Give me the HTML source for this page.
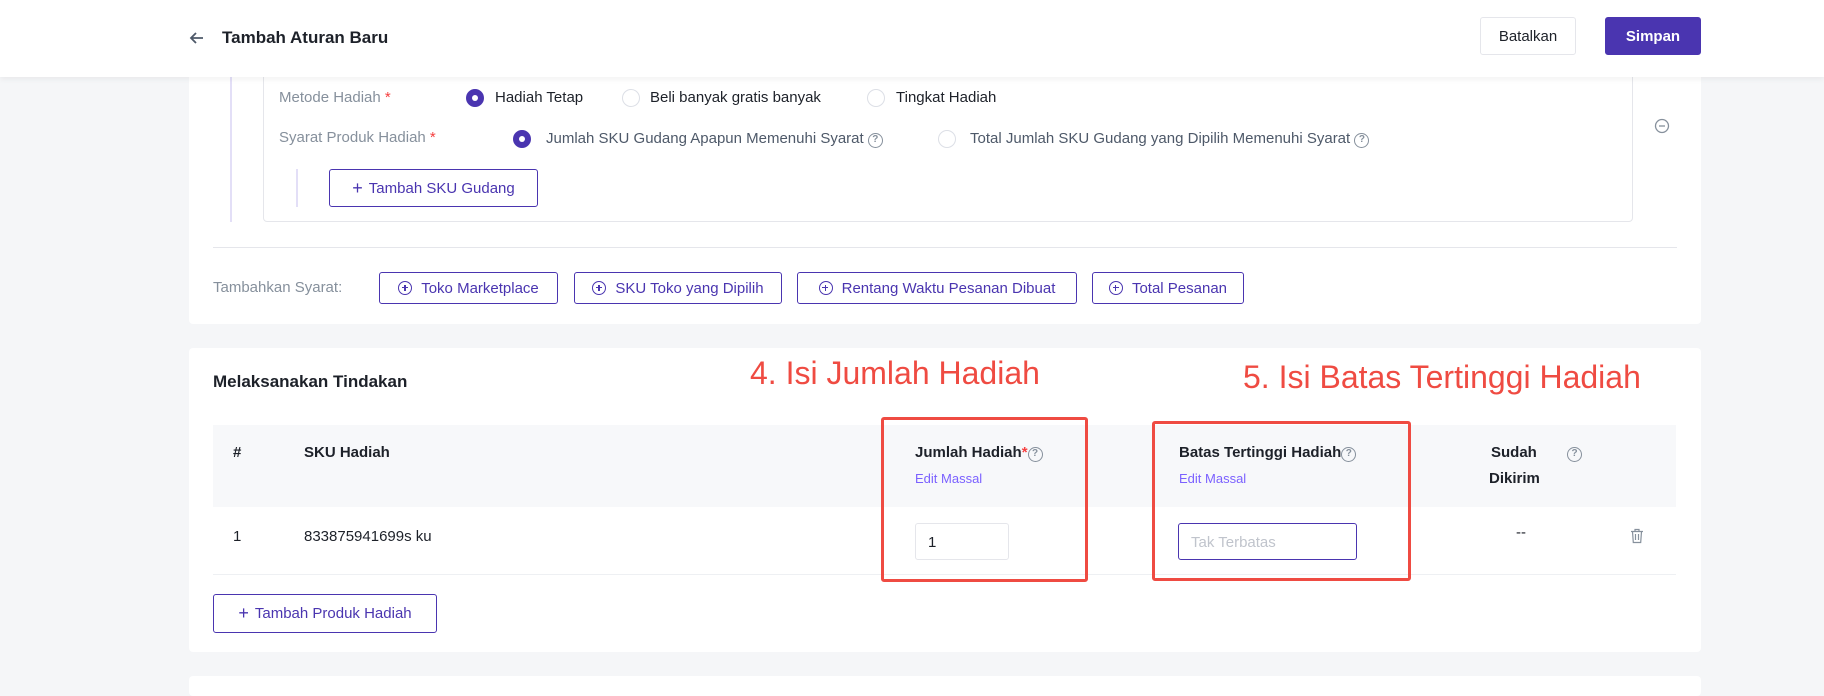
<!DOCTYPE html>
<html><head><meta charset="utf-8"><style>
*{box-sizing:border-box;margin:0;padding:0}
body{width:1824px;height:689px;overflow:hidden;background:#f5f6f8;font-family:"Liberation Sans",sans-serif;color:#1d2129;position:relative;font-size:15px}
.a{position:absolute;white-space:nowrap}
.hdr{position:absolute;left:0;top:0;width:1824px;height:77px;background:#fff;box-shadow:0 2px 6px rgba(0,0,0,.06);z-index:5}
.card{position:absolute;left:189px;width:1512px;background:#fff;border-radius:4px}
.btn{position:absolute;border:1px solid #4a35b0;border-radius:3px;color:#4a35b0;font-size:15px;display:flex;align-items:center;justify-content:center;background:#fff}
.radio{position:absolute;width:18px;height:18px;border-radius:50%;border:1px solid #dcdfe6;background:#fff}
.radio.on{background:#4a35b0;border-color:#4a35b0}
.radio.on:after{content:"";position:absolute;left:5px;top:5px;width:6px;height:6px;border-radius:50%;background:#fff}
.lbl{color:#86909c}
.req{color:#f53f3f}
.q{display:inline-block;width:15px;height:15px;border:1.5px solid #86909c;border-radius:50%;font-size:10px;line-height:12px;text-align:center;color:#86909c;font-weight:bold;vertical-align:1px}
.cp{display:inline-block;width:14px;height:14px;border:1.3px solid #4a35b0;border-radius:50%;position:relative;margin-right:9px;vertical-align:-1px}
.cp:before{content:"";position:absolute;left:2.7px;top:5px;width:6px;height:1.3px;background:#4a35b0}
.cp:after{content:"";position:absolute;left:5px;top:2.7px;width:1.3px;height:6px;background:#4a35b0}
.th{font-weight:bold;font-size:15px}
.em{color:#7b61ff;font-size:13px}
.red{position:absolute;border:3px solid #ef4b42;border-radius:3px}
.ann{position:absolute;color:#ef4b42;font-size:32px;white-space:nowrap}
</style></head><body>
<div class="hdr">
  <svg class="a" style="left:189px;top:30px" width="16" height="16" viewBox="0 0 16 16"><path d="M14 8H2M7 3L2 8l5 5" fill="none" stroke="#4e5969" stroke-width="1.8"/></svg>
  <div class="a" style="left:222px;top:28px;font-size:17px;font-weight:bold;color:#1d2129">Tambah Aturan Baru</div>
  <div class="btn" style="left:1480px;top:17px;width:96px;height:38px;border-color:#e5e6eb;color:#1d2129">Batalkan</div>
  <div class="btn" style="left:1605px;top:17px;width:96px;height:38px;background:#4a35b0;color:#fff;font-weight:bold">Simpan</div>
</div>

<div class="card" style="top:40px;height:284px"></div>
<div class="a" style="left:230px;top:77px;width:2px;height:145px;background:#e3dff7"></div>
<div class="a" style="left:263px;top:60px;width:1370px;height:162px;border:1px solid #e5e6eb;border-radius:4px;background:#fff"></div>
<div class="a lbl" style="left:279px;top:89px">Metode Hadiah <span class="req">*</span></div>
<div class="radio on" style="left:466px;top:89px"></div>
<div class="a" style="left:495px;top:89px">Hadiah Tetap</div>
<div class="radio" style="left:622px;top:89px"></div>
<div class="a" style="left:650px;top:89px">Beli banyak gratis banyak</div>
<div class="radio" style="left:867px;top:89px"></div>
<div class="a" style="left:896px;top:89px">Tingkat Hadiah</div>
<div class="a lbl" style="left:279px;top:129px">Syarat Produk Hadiah <span class="req">*</span></div>
<div class="radio on" style="left:513px;top:130px"></div>
<div class="a" style="left:546px;top:130px;color:#4e5969">Jumlah SKU Gudang Apapun Memenuhi Syarat <span class="q">?</span></div>
<div class="radio" style="left:938px;top:130px"></div>
<div class="a" style="left:970px;top:130px;color:#4e5969">Total Jumlah SKU Gudang yang Dipilih Memenuhi Syarat <span class="q">?</span></div>
<div class="a" style="left:296px;top:169px;width:2px;height:38px;background:#e3dff7"></div>
<div class="btn" style="left:329px;top:169px;width:209px;height:38px"><span style="font-size:18px;margin-right:6px">+</span>Tambah SKU Gudang</div>
<svg class="a" style="left:1654px;top:118px" width="16" height="16" viewBox="0 0 16 16"><circle cx="8" cy="8" r="6.5" fill="none" stroke="#86909c" stroke-width="1.3"/><path d="M5 8h6" stroke="#86909c" stroke-width="1.3"/></svg>
<div class="a" style="left:213px;top:247px;width:1464px;height:1px;background:#e5e6eb"></div>
<div class="a lbl" style="left:213px;top:279px">Tambahkan Syarat:</div>
<div class="btn" style="left:379px;top:272px;width:179px;height:32px"><span class="cp"></span>Toko Marketplace</div>
<div class="btn" style="left:574px;top:272px;width:208px;height:32px"><span class="cp"></span>SKU Toko yang Dipilih</div>
<div class="btn" style="left:797px;top:272px;width:280px;height:32px"><span class="cp"></span>Rentang Waktu Pesanan Dibuat</div>
<div class="btn" style="left:1092px;top:272px;width:152px;height:32px"><span class="cp"></span>Total Pesanan</div>

<div class="card" style="top:348px;height:304px"></div>
<div class="a" style="left:213px;top:372px;font-size:17px;font-weight:bold">Melaksanakan Tindakan</div>
<div class="a" style="left:213px;top:425px;width:1463px;height:82px;background:#f7f8fa"></div>
<div class="a" style="left:213px;top:574px;width:1463px;height:1px;background:#eef0f3"></div>
<div class="a th" style="left:233px;top:444px">#</div>
<div class="a th" style="left:304px;top:444px">SKU Hadiah</div>
<div class="a th" style="left:915px;top:444px">Jumlah Hadiah<span class="req">*</span><span class="q">?</span></div>
<div class="a em" style="left:915px;top:471px">Edit Massal</div>
<div class="a th" style="left:1179px;top:444px">Batas Tertinggi Hadiah<span class="q">?</span></div>
<div class="a em" style="left:1179px;top:471px">Edit Massal</div>
<div class="a th" style="left:1491px;top:444px">Sudah</div>
<div class="a th" style="left:1489px;top:470px">Dikirim</div>
<div class="a" style="left:1567px;top:444px"><span class="q">?</span></div>
<div class="a" style="left:233px;top:528px">1</div>
<div class="a" style="left:304px;top:528px">833875941699s ku</div>
<div class="a" style="left:915px;top:523px;width:94px;height:37px;border:1px solid #e5e6eb;border-radius:3px;padding:10px 0 0 12px">1</div>
<div class="a" style="left:1178px;top:523px;width:179px;height:37px;border:1px solid #4a35b0;border-radius:3px;padding:10px 0 0 12px;color:#c0c4cc">Tak Terbatas</div>
<div class="a" style="left:1516px;top:524px">--</div>
<svg class="a" style="left:1630px;top:528px" width="14" height="16" viewBox="0 0 14 16"><path d="M1 3.5h12M5 3.5V1.5h4v2M2.5 3.5l.8 11h7.4l.8-11M5.5 6v6M8.5 6v6" fill="none" stroke="#86909c" stroke-width="1.2"/></svg>
<div class="btn" style="left:213px;top:594px;width:224px;height:39px"><span style="font-size:18px;margin-right:6px">+</span>Tambah Produk Hadiah</div>

<div class="card" style="top:676px;height:20px"></div>

<div class="ann" style="left:750px;top:355px">4. Isi Jumlah Hadiah</div>
<div class="ann" style="left:1243px;top:359px">5. Isi Batas Tertinggi Hadiah</div>
<div class="red" style="left:881px;top:417px;width:207px;height:165px"></div>
<div class="red" style="left:1152px;top:421px;width:259px;height:160px"></div>
</body></html>
